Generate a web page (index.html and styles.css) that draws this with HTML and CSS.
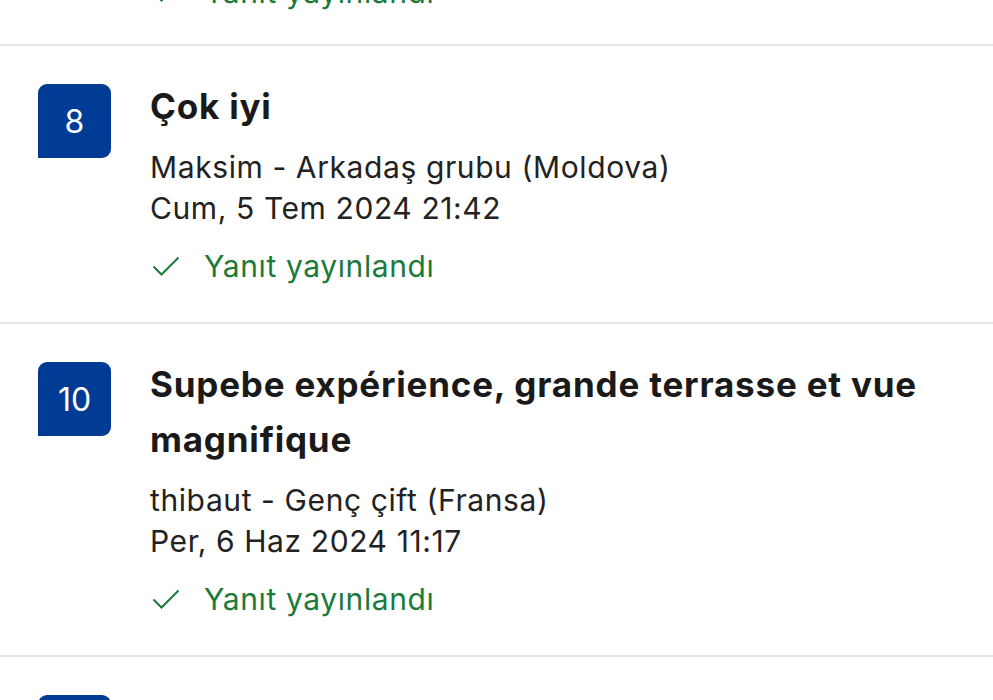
FILE: index.html
```html
<!DOCTYPE html>
<html lang="tr">
<head>
    <meta charset="UTF-8">
    <title>Yorumlar</title>
    <link rel="stylesheet" href="styles.css">
</head>
<body>
    <div class="reviews">
        <div class="review tail">
            <div class="reply">
                <svg class="check" viewBox="0 0 28 22" width="28" height="22"><path d="M1.5 11.5 L9.5 19.5 L26.5 2.5" fill="none" stroke="currentColor" stroke-width="2"/></svg>
                <span>Yanıt yayınlandı</span>
            </div>
        </div>

        <div class="review">
            <div class="score">8</div>
            <div class="body">
                <h2 class="title">Çok iyi</h2>
                <p class="meta">Maksim - Arkadaş grubu (Moldova)<br>Cum, 5 Tem 2024 21:42</p>
                <div class="reply">
                    <svg class="check" viewBox="0 0 28 22" width="28" height="22"><path d="M1.5 11.5 L9.5 19.5 L26.5 2.5" fill="none" stroke="currentColor" stroke-width="2"/></svg>
                    <span>Yanıt yayınlandı</span>
                </div>
            </div>
        </div>

        <div class="review">
            <div class="score">10</div>
            <div class="body">
                <h2 class="title">Supebe expérience, grande terrasse et vue magnifique</h2>
                <p class="meta">thibaut - Genç çift (Fransa)<br>Per, 6 Haz 2024 11:17</p>
                <div class="reply">
                    <svg class="check" viewBox="0 0 28 22" width="28" height="22"><path d="M1.5 11.5 L9.5 19.5 L26.5 2.5" fill="none" stroke="currentColor" stroke-width="2"/></svg>
                    <span>Yanıt yayınlandı</span>
                </div>
            </div>
        </div>

        <div class="review">
            <div class="score">9</div>
            <div class="body">
                <h2 class="title">Harika</h2>
            </div>
        </div>
    </div>
</body>
</html>
```

FILE: styles.css
```css
* {
    margin: 0;
    padding: 0;
    box-sizing: border-box;
}

body {
    background: #fff;
    color: #1a1a1a;
    font-family: Inter, "Noto Sans", sans-serif;
    width: 993px;
    height: 700px;
    overflow: hidden;
}

.review {
    display: flex;
    padding: 38px 0 36px 38px;
    border-bottom: 2px solid #e7e7e7;
}

/* end of the previous review, scrolled mostly out of view */
.review.tail {
    margin-top: -28px;
    padding: 0 0 32px 150px;
}

.review.tail .reply {
    margin-top: 0;
}

.score {
    flex: none;
    width: 73px;
    height: 74px;
    background: #003b95;
    color: #fff;
    border-radius: 9px 9px 9px 0;
    display: flex;
    align-items: center;
    justify-content: center;
    font-size: 32px;
    font-weight: 400;
}

.body {
    margin-left: 39px;
    flex: 1;
    padding-right: 30px;
}

.title {
    margin-top: -5px;
    font-size: 35px;
    font-weight: 700;
    line-height: 55px;
    letter-spacing: 0.8px;
    color: #1a1a1a;
}

.meta {
    margin-top: 13px;
    font-size: 30px;
    line-height: 41px;
    letter-spacing: 0.6px;
    color: #222;
}

.reply {
    margin-top: 17px;
    height: 40px;
    display: flex;
    align-items: center;
    color: #1b7a3a;
    font-size: 30px;
    letter-spacing: 0.6px;
}

.check {
    margin-left: 2px;
    margin-right: 24px;
}
```
